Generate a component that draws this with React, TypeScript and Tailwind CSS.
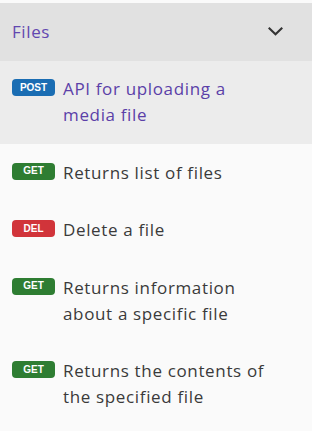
import React from "react";

type Item = { method: "POST" | "GET" | "DEL"; text: string; active?: boolean };

const items: Item[] = [
  { method: "POST", text: "API for uploading a media file", active: true },
  { method: "GET", text: "Returns list of files" },
  { method: "DEL", text: "Delete a file" },
  { method: "GET", text: "Returns information about a specific file" },
  { method: "GET", text: "Returns the contents of the specified file" },
];

function Badge({ method }: { method: Item["method"] }) {
  const color =
    method === "POST" ? "bg-[#1a6db3]" : method === "GET" ? "bg-[#2e7d32]" : "bg-[#d1343a]";
  return (
    <span
      className={`${color} mt-[3px] flex h-[17px] w-[43px] shrink-0 items-center justify-center rounded-[4px] text-[10px] font-bold leading-none text-white`}
      style={{ fontFamily: '"Liberation Sans", Arial, sans-serif' }}
    >
      {method}
    </span>
  );
}

export default function App() {
  return (
    <div
      className="min-h-[431px] w-[312px] bg-[#fafafa] pt-[3px]"
      style={{ fontFamily: '"Open Sans", sans-serif' }}
    >
      <div className="flex h-[57.5px] items-center justify-between bg-[#e1e1e1] pl-[12px] pr-[29px]">
        <span className="text-[17px] tracking-[0.6px] text-[#6247b0]">Files</span>
        <svg width="15" height="9" viewBox="0 0 15 9" fill="none">
          <path d="M1.5 1.5 L7.5 7.3 L13.5 1.5" stroke="#333" strokeWidth="2.1" strokeLinecap="square" />
        </svg>
      </div>
      <div className="flex flex-col">
        {items.map((it, i) => (
          <div
            key={i}
            className={`flex gap-[8px] py-[15.75px] pl-[12px] pr-[37px] ${it.active ? "bg-[#ececec]" : ""}`}
          >
            <Badge method={it.method} />
            <span
              className={`text-[17px] leading-[26px] tracking-[0.65px] ${
                it.active ? "text-[#5b3fa8]" : "text-[#3a3a3a]"
              }`}
            >
              {it.text}
            </span>
          </div>
        ))}
      </div>
    </div>
  );
}
